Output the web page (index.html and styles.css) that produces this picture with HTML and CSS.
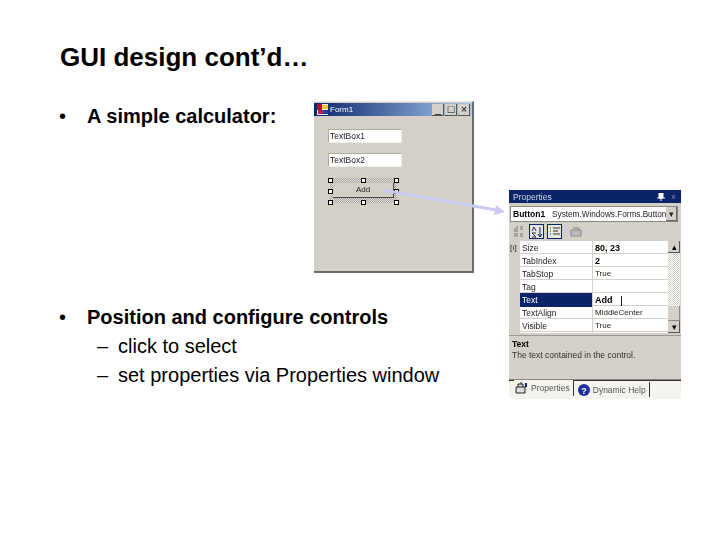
FILE: index.html
```html
<!DOCTYPE html>
<html lang="en">
<head>
  <meta charset="UTF-8">
  <meta name="viewport" content="width=device-width, initial-scale=1.0">
  <title>GUI design cont'd</title>
  <link rel="stylesheet" href="styles.css">
</head>
<body>
  <div class="slide">
    <h1>GUI design cont’d…</h1>

    <ul class="points first">
      <li>A simple calculator:</li>
    </ul>

    <ul class="points second">
      <li>Position and configure controls
        <ul>
          <li>click to select</li>
          <li>set properties via Properties window</li>
        </ul>
      </li>
    </ul>

    <!-- form designer screenshot -->
    <div class="form-window">
      <div class="form-title">
        <svg class="form-icon" width="11" height="11" viewBox="0 0 11 11">
          <rect width="11" height="11" fill="#e8e8f8"/>
          <rect x="0" y="0" width="5" height="6" fill="#b01030"/>
          <rect x="5" y="1" width="6" height="4" fill="#e8d020"/>
          <rect x="1" y="6" width="5" height="4" fill="#c02040"/>
          <rect x="6" y="6" width="5" height="4" fill="#2040a0"/>
        </svg>
        <span class="form-name">Form1</span>
        <div class="caption-buttons">
          <span class="cap-btn">_</span>
          <span class="cap-btn">□</span>
          <span class="cap-btn">×</span>
        </div>
      </div>
      <div class="form-body">
        <div class="textbox">TextBox1</div>
        <div class="textbox">TextBox2</div>
        <div class="selection">
          <div class="add-button">Add</div>
          <i class="handle h-tl"></i><i class="handle h-tc"></i><i class="handle h-tr"></i>
          <i class="handle h-ml"></i><i class="handle h-mr"></i>
          <i class="handle h-bl"></i><i class="handle h-bc"></i><i class="handle h-br"></i>
        </div>
      </div>
    </div>

    <!-- properties window screenshot -->
    <div class="props-window">
      <div class="props-title">
        <span>Properties</span>
        <span class="props-pin">
          <svg width="8" height="8" viewBox="0 0 8 8"><path d="M2 0h4v5H2zM0 5h8M4 5v3" stroke="#fff" fill="#fff"/></svg>
          <span class="props-close">×</span>
        </span>
      </div>
      <div class="combo">
        <b>Button1</b>
        <span class="combo-type">System.Windows.Forms.Button</span>
        <span class="combo-arrow">▾</span>
      </div>
      <div class="toolbar">
        <span class="tool">
          <svg width="12" height="12" viewBox="0 0 12 12"><path d="M3 1h2M1 3h4M1 5h4M1 8h4M1 10h4M7 1h3M7 3h3M7 8h3M7 10h3" stroke="#777" fill="none"/></svg>
        </span>
        <span class="tool active">
          <svg width="12" height="12" viewBox="0 0 12 12"><path d="M1 5l2-4 2 4M1 11h4L1 7h4" stroke="#333" fill="none"/><path d="M9 1v10M7 8l2 3 2-3" stroke="#0a246a" fill="none"/></svg>
        </span>
        <span class="tool active">
          <svg width="12" height="12" viewBox="0 0 12 12"><path d="M1 2h1M4 2h7M1 5h1M4 5h5M1 8h1M4 8h7" stroke="#333" fill="none"/></svg>
        </span>
        <span class="tool last">
          <svg width="12" height="12" viewBox="0 0 12 12"><path d="M1 4h10v6H1zM3 2h6v2" stroke="#888" fill="#bbb"/></svg>
        </span>
      </div>
      <div class="grid-wrap">
        <div class="gutter"><span>[ı]</span></div>
        <div class="grid">
          <div class="row"><span class="name">Size</span><b class="value">80, 23</b></div>
          <div class="row"><span class="name">TabIndex</span><b class="value">2</b></div>
          <div class="row"><span class="name">TabStop</span><span class="value">True</span></div>
          <div class="row"><span class="name">Tag</span><span class="value"></span></div>
          <div class="row picked"><span class="name">Text</span><b class="value">Add <span class="caret"></span></b></div>
          <div class="row"><span class="name">TextAlign</span><span class="value">MiddleCenter</span></div>
          <div class="row"><span class="name">Visible</span><span class="value">True</span></div>
        </div>
        <div class="scrollbar">
          <span class="scroll-btn">▴</span>
          <span class="scroll-track"></span>
          <span class="scroll-thumb"></span>
          <span class="scroll-btn">▾</span>
        </div>
      </div>
      <div class="description">
        <b>Text</b>
        <span>The text contained in the control.</span>
      </div>
      <div class="tabs">
        <span class="tab selected">
          <svg width="13" height="12" viewBox="0 0 13 12"><path d="M1 5h9v6H1zM3 5V2h5v3M5 1h2" stroke="#222" fill="#ddd"/><path d="M11 1v4" stroke="#0a246a" stroke-width="2"/></svg>
          Properties
        </span>
        <span class="tab">
          <svg width="12" height="12" viewBox="0 0 12 12"><circle cx="6" cy="6" r="6" fill="#1c2f9c"/><text x="6" y="9.5" font-size="9" font-weight="700" fill="#fff" text-anchor="middle" font-family="Liberation Sans">?</text></svg>
          Dynamic Help
        </span>
      </div>
    </div>

    <svg class="arrow" width="130" height="34" viewBox="0 0 130 34">
      <path d="M0 2 L114 22" stroke="#c9c9f2" stroke-width="3" fill="none"/>
      <path d="M114 17 L123 24 L112 27 Z" fill="#c9c9f2"/>
    </svg>
  </div>
</body>
</html>
```

FILE: styles.css
```css
body {
  margin: 0;
  background: #fff;
  font-family: "Liberation Sans", Arial, sans-serif;
  color: #000;
}

.slide {
  position: relative;
  width: 720px;
  height: 540px;
  overflow: hidden;
}

h1 {
  margin: 0;
  padding: 42px 0 0 60px;
  font-size: 26px;
  line-height: 30px;
  font-weight: 700;
}

.points {
  list-style: none;
  margin: 0;
  padding: 0 0 0 87px;
  font-size: 20px;
  font-weight: 700;
  line-height: 29px;
}

.points > li {
  position: relative;
}

.points > li::before {
  content: "•";
  position: absolute;
  left: -28px;
  font-weight: 400;
}

.first {
  margin-top: 30px;
}

.second {
  margin-top: 172px;
}

.points ul {
  list-style: none;
  margin: 0;
  padding: 0 0 0 31px;
  font-weight: 400;
}

.points ul li::before {
  content: "–";
  margin-left: -21px;
  display: inline-block;
  width: 21px;
}

/* form designer */
.form-window {
  position: absolute;
  left: 314px;
  top: 101px;
  width: 160px;
  height: 172px;
  box-sizing: border-box;
  background: #d4d0c8;
  border-right: 2px solid #6a6a6a;
  border-bottom: 2px solid #6a6a6a;
  border-top: 1px solid #e8e8e8;
  filter: blur(0.3px);
}

.form-title {
  display: flex;
  align-items: center;
  height: 13px;
  padding: 0 2px 0 3px;
  margin-top: 1px;
  background: linear-gradient(to right, #0a246a, #a6caf0);
  color: #fff;
  font-size: 8px;
}

.form-name {
  margin-left: 2px;
}

.caption-buttons {
  display: flex;
  gap: 1px;
  margin-left: auto;
}

.cap-btn {
  width: 12px;
  height: 12px;
  background: #d4d0c8;
  color: #000;
  font-size: 11px;
  line-height: 10px;
  text-align: center;
  box-shadow: inset -1px -1px #555;
}

.form-body {
  display: flex;
  flex-direction: column;
  padding: 13px 0 0 14px;
}

.textbox {
  width: 74px;
  height: 14px;
  box-sizing: border-box;
  margin-bottom: 10px;
  padding-left: 1px;
  background: #fff;
  border: 1px solid #aaa8a0;
  border-right-color: #eeeeea;
  border-bottom-color: #eeeeea;
  font-size: 8.5px;
  line-height: 12px;
  color: #222;
}

.selection {
  position: relative;
  width: 67px;
  height: 25px;
  margin: 1px 0 0 2px;
  padding: 5px 3px;
  box-sizing: border-box;
  background: repeating-conic-gradient(#a8a6a0 0 25%, #dedcd6 0 50%) 0 0 / 2px 2px;
}

.add-button {
  height: 15px;
  background: #d4d0c8;
  border-right: 1px solid #444;
  border-bottom: 1px solid #444;
  box-sizing: border-box;
  font-size: 8px;
  line-height: 14px;
  text-align: center;
  color: #222;
}

.handle {
  position: absolute;
  width: 3px;
  height: 3px;
  background: #fff;
  border: 1px solid #000;
}

.h-tl, .h-tc, .h-tr { top: 0; }
.h-ml, .h-mr { top: 11px; }
.h-bl, .h-bc, .h-br { bottom: -2px; }
.h-tl, .h-ml, .h-bl { left: -2px; }
.h-tc, .h-bc { left: 31px; }
.h-tr, .h-mr, .h-br { right: -2px; }

/* properties window */
.props-window {
  position: absolute;
  left: 509px;
  top: 190px;
  width: 172px;
  height: 209px;
  display: flex;
  flex-direction: column;
  background: #d4d0c8;
  font-size: 8.5px;
  color: #222;
  filter: blur(0.3px);
}

.props-title {
  display: flex;
  justify-content: space-between;
  align-items: center;
  height: 13px;
  padding: 0 5px 0 4px;
  background: #0a246a;
  color: #d8d8e8;
}

.props-pin {
  display: flex;
  align-items: center;
  gap: 6px;
}

.props-close {
  color: #8a94b8;
}

.combo {
  display: flex;
  align-items: center;
  gap: 7px;
  height: 16px;
  margin: 3px 3px 0 1px;
  padding-left: 2px;
  box-sizing: border-box;
  background: #fff;
  border: 1px solid #888;
  white-space: nowrap;
  overflow: hidden;
  position: relative;
}

.combo b {
  font-size: 8.5px;
  color: #000;
}

.combo-type {
  font-size: 8.2px;
}

.combo-arrow {
  position: absolute;
  right: 0;
  top: 0;
  width: 11px;
  height: 14px;
  background: #d4d0c8;
  text-align: center;
  line-height: 14px;
  box-shadow: inset -1px -1px #666;
}

.toolbar {
  display: flex;
  align-items: center;
  gap: 3px;
  height: 19px;
  padding-left: 2px;
}

.tool {
  display: flex;
  align-items: center;
  justify-content: center;
  width: 15px;
  height: 15px;
  box-sizing: border-box;
}

.tool.active {
  background: #e8e6e0;
  border: 1px solid #0a246a;
}

.tool.last {
  margin-left: 3px;
}

.grid-wrap {
  display: flex;
  height: 92px;
  margin-right: 1px;
  background: #fff;
}

.gutter {
  width: 11px;
  padding: 1px 0 0 1px;
  box-sizing: border-box;
  background: #d4d0c8;
  font-size: 8px;
  line-height: 12px;
  white-space: nowrap;
}

.grid {
  flex: 1;
}

.row {
  display: grid;
  grid-template-columns: 73px 1fr;
  height: 13px;
  box-sizing: border-box;
  border-bottom: 1px solid #d4d0c8;
  line-height: 14px;
}

.row .name {
  padding-left: 2px;
  border-right: 1px solid #d4d0c8;
}

.row .value {
  padding-left: 2px;
  font-size: 8px;
}

.row b.value {
  font-size: 9px;
  color: #000;
}

.row.picked .name {
  background: #0a246a;
  color: #fff;
}

.caret {
  display: inline-block;
  width: 1px;
  height: 10px;
  margin-left: 6px;
  background: #222;
  vertical-align: middle;
}

.scrollbar {
  display: flex;
  flex-direction: column;
  width: 12px;
  background: repeating-conic-gradient(#d4d0c8 0 25%, #fff 0 50%) 0 0 / 2px 2px;
}

.scroll-btn {
  height: 12px;
  background: #d4d0c8;
  text-align: center;
  line-height: 12px;
  color: #000;
  box-shadow: inset -1px -1px #555;
}

.scroll-track {
  flex: 1;
}

.scroll-thumb {
  height: 15px;
  background: #d4d0c8;
  box-shadow: inset -1px -1px #888;
}

.description {
  display: flex;
  flex-direction: column;
  height: 45px;
  margin-top: 2px;
  padding: 3px 3px;
  box-sizing: border-box;
  border-top: 1px solid #999;
  border-bottom: 1px solid #888;
  line-height: 11px;
  color: #333;
}

.description b {
  color: #000;
}

.tabs {
  display: flex;
  flex: 1;
  align-items: flex-start;
  padding-left: 5px;
  gap: 3px;
  border-top: 1px solid #333;
  background: #f4f3ee;
  color: #555;
}

.tab {
  display: flex;
  align-items: center;
  gap: 3px;
  height: 15px;
  margin-top: 1px;
  padding: 0 3px 0 1px;
  border-right: 1px solid #333;
}

.tab.selected {
  height: 16px;
  margin-top: -1px;
  background: #f4f3ee;
}

.arrow {
  position: absolute;
  left: 382px;
  top: 188px;
}
```
